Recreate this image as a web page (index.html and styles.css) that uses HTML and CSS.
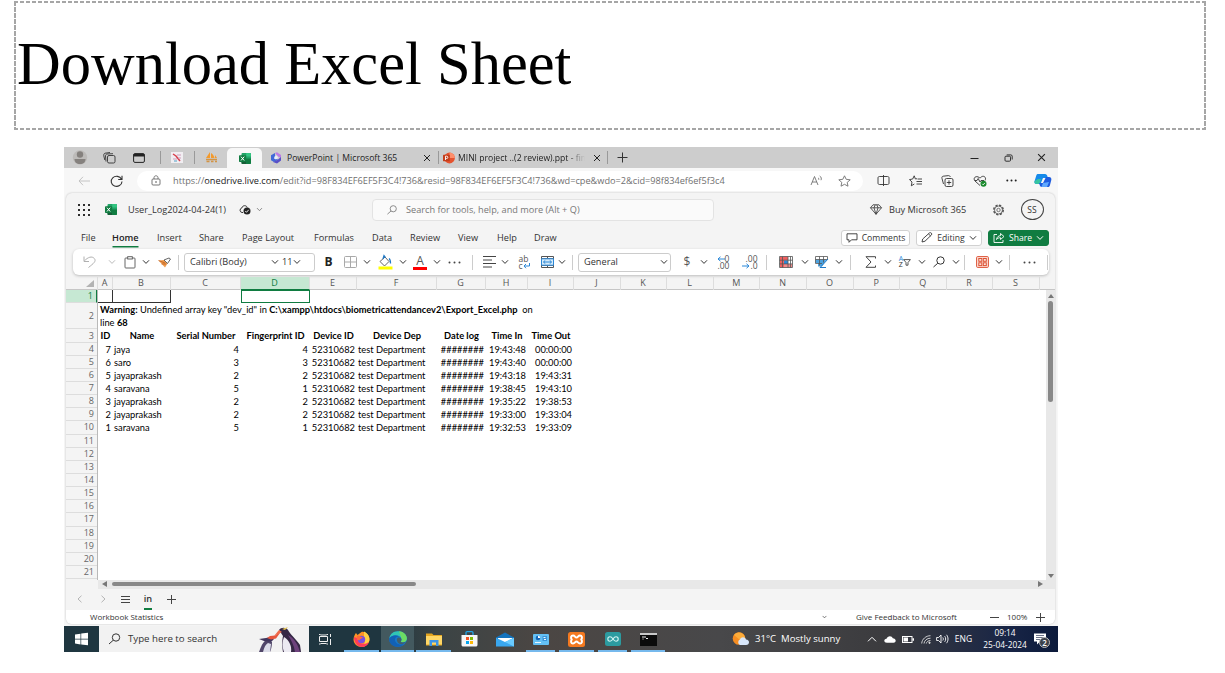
FILE: index.html
```
<!DOCTYPE html>
<html lang="en">
<head>
<meta charset="utf-8">
<title>Download Excel Sheet</title>
<link rel="stylesheet" href="styles.css">
</head>
<body>
<svg class="defs" width="0" height="0" aria-hidden="true">
  <symbol id="chev" viewBox="0 0 8 6"><path d="M1 1.3 4 4.4 7 1.3" fill="none" stroke="currentColor" stroke-width="1"/></symbol>
  <symbol id="close" viewBox="0 0 8 8"><path d="M1 1l6 6M7 1 1 7" fill="none" stroke="currentColor" stroke-width="1"/></symbol>
  <symbol id="excel" viewBox="0 0 12 11"><rect x="2.5" width="9.5" height="11" rx="1" fill="#21a366"/><path d="M7.2 0H11a1 1 0 0 1 1 1v2.5H7.2z" fill="#33c481"/><path d="M7.2 5.5H12V10a1 1 0 0 1-1 1H7.2z" fill="#107c41"/><path d="M2.5 5.5h4.7V11H3.500a1 1 0 0 1-1-1z" fill="#185c37"/><rect y="2.200" width="7.200" height="6.800" rx=".7" fill="#107c41"/><path d="m2 3.700 3.200 3.800M5.200 3.700 2 7.500" stroke="#fff" stroke-width="1"/></symbol>
  <symbol id="search" viewBox="0 0 13 12"><circle cx="8" cy="4.500" r="3.700" fill="none" stroke="currentColor"/><path d="M5.300 7.200 1 11" stroke="currentColor" fill="none"/></symbol>
</svg>

<header class="title-box"><h1>Download Excel Sheet</h1></header>

<main class="window">
  <div class="tabs">
    <svg class="c" width="16" height="15" viewBox="0 0 16 15"><circle cx="8" cy="7.500" r="7.200" fill="#bdbbb9"/><circle cx="8" cy="4.500" r="3.200" fill="#85817e"/><path d="M2.500 9h11c0 3-2 5-5.500 5s-5.500-2-5.500-5z" fill="#85817e"/></svg>
    <svg class="c" width="13" height="12" viewBox="0 0 13 12" fill="none" stroke="#333" stroke-width=".9"><rect x="4.500" y="3.500" width="7.500" height="7.500" rx="1.500"/><path d="M3 9.500 2.500 4c0-1 .5-1.800 1.500-2l6-.3M1.800 8 .8 3.800C.6 2.500 1 1.500 2 1.200L7 .5"/></svg>
    <svg class="c" width="12" height="10" viewBox="0 0 12 10"><rect x=".6" y=".6" width="10.800" height="8.800" rx="1.300" fill="none" stroke="#222"/><path d="M.6 1h10.800v2.500H.6z" fill="#222"/></svg>
    <i class="sep"></i>
    <svg class="c" width="12" height="11" viewBox="0 0 12 11"><rect width="12" height="11" fill="#f1eef2"/><path d="m2 2 3 2 4 5" stroke="#d83f4c" stroke-width="1.500" fill="none"/><path d="M6 3h4M2 7h4M7 6h3" stroke="#ce9cba" fill="none"/><path d="M3 9h3" stroke="#53a1c6"/></svg>
    <i class="sep"></i>
    <svg class="c" width="13" height="11" viewBox="0 0 13 11"><path d="M1 6 5 0v6zM6 6V1c2 1 3 3 3.500 5zM10 6V3l2 3z" fill="#f39a2c"/><path d="M1 7.500h11M1.500 9.500h3M6 9.500h2.500M10 9.500h2" stroke="#d39445" stroke-width="1.400"/></svg>
    <div class="active-tab"><svg width="12" height="11"><use href="#excel"/></svg></div>
    <svg class="c" width="12" height="12" viewBox="0 0 12 12"><path d="M5 1 1 3.300v5L4 10 8 7.500 5 6z" fill="#4069d8"/><path d="m5 1 2-.7 4 2.800v3L8 4.500z" fill="#bc7be5"/><path d="M11 5v3.500L7 11.500 3 10l5-2.500z" fill="#5850c8"/><path d="M4.500 4.500 7 3.500 8 6 6 7.500 4 6.500z" fill="#e8ecfb"/></svg>
    <span class="t-ppt">PowerPoint | Microsoft 365</span>
    <svg class="c dark" width="8" height="8"><use href="#close"/></svg>
    <i class="sep"></i>
    <svg class="c" width="12" height="12" viewBox="0 0 12 12"><circle cx="6.500" cy="6" r="5.400" fill="#e5532f"/><path d="M6.500.6a5.400 5.400 0 0 1 5.400 5.400H6.500z" fill="#ff8f6b"/><rect y="2.800" width="6.800" height="6.500" rx=".6" fill="#c43e1c"/><path d="M2.500 8V4.200h1.200a1.100 1.100 0 0 1 0 2.300H2.500" stroke="#fff" fill="none" stroke-width=".9"/></svg>
    <span class="t-mini">MINI project ..(2 review).ppt - fina</span>
    <svg class="c dark" width="8" height="8"><use href="#close"/></svg>
    <i class="sep"></i>
    <svg class="c" width="11" height="11" viewBox="0 0 11 11"><path d="M5.500.5v10M.5 5.500h10" stroke="#333"/></svg>
    <span></span>
    <svg class="c" width="9" height="8" viewBox="0 0 9 8"><path d="M.5 4.500h8" stroke="#222"/></svg>
    <svg class="c" width="9" height="8" viewBox="0 0 9 8" fill="none" stroke="#222" stroke-width=".9"><rect x="1" y="2.200" width="5.500" height="5" rx="1"/><path d="M2.700.9h4.100c.8 0 1.400.5 1.400 1.200v3.400"/></svg>
    <svg class="c dark" width="9" height="9"><use href="#close"/></svg>
  </div>

  <div class="address">
    <svg class="c" width="12" height="10" viewBox="0 0 12 10" fill="none" stroke="#c4c4c4"><path d="M12 5H1M5 .8 1 5l4 4.200"/></svg>
    <svg class="c" width="13" height="12" viewBox="0 0 13 12" fill="none" stroke="#333" stroke-width="1.100"><path d="M11.500 4.200A5.400 5 0 1 0 12 6.500M12 .8v3.700H8.200"/></svg>
    <div class="pill">
      <svg width="10" height="11" viewBox="0 0 10 11" fill="none" stroke="#6a6a6a" stroke-width=".9"><rect x="1" y="4" width="8" height="6" rx="1"/><path d="M3 4V2.600C3 .2 7 .2 7 2.600V4"/><circle cx="5" cy="7" r=".5"/></svg>
      <span class="url">https://<b>onedrive.live.com</b>/edit?id=98F834EF6EF5F3C4!736&amp;resid=98F834EF6EF5F3C4!736&amp;wd=cpe&amp;wdo=2&amp;cid=98f834ef6ef5f3c4</span>
      <svg width="13" height="11" viewBox="0 0 13 11" fill="none" stroke="#707070" stroke-width=".9"><path d="m1 10 3.500-8.500L8 10M2.200 7h4.600M8 2.800c.9.500.9 1.400.7 2M9.700 1c1.700 1 1.900 2.700 1.300 4.200"/></svg>
      <svg class="star" width="13" height="12" viewBox="0 0 13 12" fill="none" stroke="#707070" stroke-width=".9"><path id="star" d="m6.500.8 1.700 3.500 4 .5-3 2.600.8 3.800-3.500-1.900L3 11.200l.8-3.800-3-2.600 4-.5z"/></svg>
    </div>
    <svg class="c" width="13" height="11" viewBox="0 0 13 11" fill="none" stroke="#333" stroke-width=".9"><path d="M5 1.500H2.500C1.500 1.500 1 2 1 3v5c0 1 .5 1.500 1.500 1.500H5M8 1.500h2.500c1 0 1.500.5 1.500 1.500v5c0 1-.5 1.500-1.500 1.500H8M6.500 0v11M5 1.500h3M5 9.500h3"/></svg>
    <svg class="c" width="13" height="12" viewBox="0 0 13 12" fill="none" stroke="#333" stroke-width=".9"><path d="M8 3.700 6.400 4 5.200.8 3.700 4l-3.200.6L3 7l-.7 3.800 3-1.800M8.500 4H13M7.500 6.500H13M7.500 9H13"/></svg>
    <svg class="c" width="13" height="12" viewBox="0 0 13 12" fill="none" stroke="#333" stroke-width=".9"><rect x="4" y="3.500" width="8" height="8" rx="1.500"/><path d="M8 5.300v4.400M5.800 7.500h4.400M2.500 9 1 3.500C.7 2 1 1.500 2.200 1.200L7.500.6c1 0 1.500.4 1.800 1.400"/></svg>
    <svg class="c" width="14" height="12" viewBox="0 0 14 12" fill="none" stroke="#333" stroke-width=".9"><path d="M7 10.500 2 6C-.5 3 3 .2 6.200 2.500L7 3l.7-.5C10-.2 14 2 12 5.500M2 5.500h2l1.200-2L7 7l1-1.500h3"/><circle cx="10.500" cy="8.800" r="3" fill="#1b8a2d" stroke="none"/><path d="m9.200 8.800 1 1 1.700-1.900" stroke="#fff"/></svg>
    <svg class="c" width="11" height="3" viewBox="0 0 11 3" fill="#222"><circle cx="1.300" cy="1.500" r="1"/><circle cx="5.500" cy="1.500" r="1"/><circle cx="9.700" cy="1.500" r="1"/></svg>
    <svg class="c" width="18" height="15" viewBox="0 0 18 15"><path d="M4 1h7c1.500 0 2 1 2.300 2l.7 2H9L6.500 11H2.500C.7 11 0 9.500.6 8L2.300 2.500C2.600 1.500 3 1 4 1z" fill="#168bea"/><path d="M4 6h3l-1.500 5H2.500C.7 11 0 9.500.6 8z" fill="#36c3a2"/><path d="M14 14H8c-1.500 0-2-1-2.300-2L5 10h4l3-6h3c2 0 2.700 1.500 2.300 3L16 12c-.3 1.500-1 2-2 2z" fill="#1f5ddf"/><path d="m9 10-1.500 4H13l2-5z" fill="#5fa9ff"/></svg>
  </div>

  <div class="app">
    <div class="app-head">
      <svg class="c" width="12" height="12" viewBox="0 0 12 12" fill="#2d2d2d"><path d="M0 0h2v2H0zM5 0h2v2H5zM10 0h2v2h-2zM0 5h2v2H0zM5 5h2v2H5zM10 5h2v2h-2zM0 10h2v2H0zM5 10h2v2H5zM10 10h2v2h-2z"/></svg>
      <svg class="c" width="12" height="11"><use href="#excel"/></svg>
      <span class="fname">User_Log2024-04-24(1)</span>
      <svg class="c" width="12" height="10" viewBox="0 0 12 10"><path d="M4 7.500H3A2.300 2.300 0 0 1 2.800 3C3.500 0 7.500 0 8.200 2.500" fill="none" stroke="#333"/><circle cx="8" cy="6" r="3.500" fill="#222"/><path d="m6.300 6 1.200 1.300 2.200-2.500" fill="none" stroke="#fff" stroke-width=".9"/></svg>
      <svg class="c grey" width="7" height="5"><use href="#chev"/></svg>
      <div class="searchbox"><svg width="12" height="10"><use href="#search"/></svg><span>Search for tools, help, and more (Alt + Q)</span></div>
      <svg class="c" width="12" height="11" viewBox="0 0 12 11" fill="none" stroke="#333" stroke-width=".8"><path d="M3 .8h6l2.500 3L6 10.300.5 3.800zM.5 3.800h11M4 3.800l2 6.500 2-6.500L6.800.8M4 3.800 5.200.8"/></svg>
      <span class="buy">Buy Microsoft 365</span>
      <svg class="c" width="13" height="12" viewBox="0 0 13 12" fill="none" stroke="#555"><circle cx="6.500" cy="6" r="4.700" stroke-width="1.600" stroke-dasharray="2.200 1.490"/><circle cx="6.500" cy="6" r="4" stroke-width=".8"/><circle cx="6.500" cy="6" r="1.700" stroke-width=".8"/></svg>
      <span class="avatar">SS</span>
    </div>

    <div class="menu">
      <span>File</span><span class="on">Home</span><span>Insert</span><span>Share</span><span>Page Layout</span><span>Formulas</span><span>Data</span><span>Review</span><span>View</span><span>Help</span><span>Draw</span>
      <div class="btn"><svg width="12" height="10" viewBox="0 0 12 10" fill="none" stroke="#333" stroke-width=".9"><path d="M1 .8h10v6H5.500L3 9.300V6.800H1z"/></svg>Comments</div>
      <div class="btn"><svg width="12" height="11" viewBox="0 0 12 11" fill="none" stroke="#333" stroke-width=".9"><path d="m1 10 .7-3L8.500.9c1.300-.9 3 .8 2 2L4 9.200zM7.500 2l2.200 2"/></svg>Editing<svg width="8" height="6"><use href="#chev"/></svg></div>
      <div class="btn share"><svg width="12" height="11" viewBox="0 0 12 11" fill="none" stroke="#fff" stroke-width=".9"><path d="M4 2.500H1v8h9V8M3.500 7.500c.3-2.500 2-3.800 4-3.800V1.500l3.500 3-3.500 3V5.700c-1.700 0-3 .5-4 1.800z"/></svg>Share<svg width="8" height="6"><use href="#chev"/></svg></div>
    </div>

    <div class="ribbon">
      <svg class="c" width="13" height="12" viewBox="0 0 13 12" fill="none" stroke="#b0b0b0"><path d="M1 .5v5h5M1.300 5C5 1 9-.2 11.300 2.500S10.500 7.500 5.500 11.500"/></svg>
      <svg class="c pale" width="8" height="6"><use href="#chev"/></svg>
      <svg class="c" width="12" height="13" viewBox="0 0 12 13" fill="none" stroke="#555" stroke-width=".9"><rect x="1" y="2" width="10" height="10" rx=".8"/><rect x="3.700" y=".7" width="4.600" height="2.300" fill="#fff"/></svg>
      <svg class="c" width="8" height="6"><use href="#chev"/></svg>
      <svg class="c" width="13" height="11" viewBox="0 0 13 11"><path d="M.5 3.500 6 3l3.500 3.500L7 10.500z" fill="#ee9c4f"/><path d="m6 3 3.500 3.500 3-4.500L11 1z" fill="#fff" stroke="#555" stroke-width=".9"/><path d="M.5 3.500 7 6M3.500 7 8 7" stroke="#b95817" fill="none" stroke-width=".7"/></svg>
      <i class="rsep"></i>
      <div class="font"><span>Calibri (Body)</span><svg width="8" height="6"><use href="#chev"/></svg><span class="size">11</span><svg width="8" height="6"><use href="#chev"/></svg></div>
      <span class="c bold">B</span>
      <svg class="c" width="13" height="12" viewBox="0 0 13 12" fill="none" stroke="#a9a9a9"><rect x=".5" y=".5" width="12" height="11" rx="1"/><path d="M6.500.5v11M.5 6h12"/></svg>
      <svg class="c" width="8" height="6"><use href="#chev"/></svg>
      <svg class="c" width="15" height="15" viewBox="0 0 15 15"><path d="m2 6.500 5-4.500 4 4.500-4.500 4.500z" fill="none" stroke="#555" stroke-width=".9"/><path d="m5 4 1-3.300 1.500 2M11 3.500c1.500 1 1.500 3 1.500 5" fill="none" stroke="#2079c7" stroke-width="1.300"/><path d="M.5 11.500h14v3H.5z" fill="#ff0"/></svg>
      <svg class="c" width="8" height="6"><use href="#chev"/></svg>
      <span class="fcolor">A</span>
      <svg class="c" width="8" height="6"><use href="#chev"/></svg>
      <svg class="c" width="13" height="3" viewBox="0 0 13 3" fill="#444"><circle cx="1.500" cy="1.500" r="1"/><circle cx="6.500" cy="1.500" r="1"/><circle cx="11.500" cy="1.500" r="1"/></svg>
      <i class="rsep"></i>
      <svg class="c" width="13" height="12" viewBox="0 0 13 12" stroke="#444" fill="none"><path d="M0 .5h13M0 4h9M0 7.500h13M0 11h9"/></svg>
      <svg class="c" width="8" height="6"><use href="#chev"/></svg>
      <div class="wrap"><span>ab</span><span>c<svg width="7" height="6" viewBox="0 0 7 6" fill="none" stroke="#2b88d8"><path d="M6.500 0v3H1M3 1 1 3l2 2.200"/></svg></span></div>
      <svg class="c" width="13" height="12" viewBox="0 0 13 12" fill="none"><path d="M.5.500h12v11H.5zM6.500.5v2M6.500 9.500v2M.5 2.500h12M.5 9.500h12" stroke="#555"/><path d="M.5 2.800h12v6.400H.5z" fill="#d7ebf9" stroke="#2b88d8"/><path d="M2.500 6h8M4.300 4.300 2.500 6l1.800 1.700M8.700 4.300 10.500 6 8.700 7.700" stroke="#2b88d8"/></svg>
      <svg class="c" width="8" height="6"><use href="#chev"/></svg>
      <i class="rsep"></i>
      <div class="numfmt"><span>General</span><svg width="8" height="6"><use href="#chev"/></svg></div>
      <span class="c dollar">$</span>
      <svg class="c" width="8" height="6"><use href="#chev"/></svg>
      <div class="dec"><span><svg width="8" height="6" viewBox="0 0 8 6" fill="none" stroke="#2b88d8"><path d="M8 3H1M3.500.8 1 3l2.500 2.200"/></svg>0</span><span>.00</span></div>
      <div class="dec"><span>.00</span><span><svg width="8" height="6" viewBox="0 0 8 6" fill="none" stroke="#2b88d8"><path d="M0 3h7M4.500.8 7 3 4.500 5.200"/></svg>.0</span></div>
      <i class="rsep"></i>
      <svg class="c" width="14" height="12" viewBox="0 0 14 12"><path d="M1 .5h4v11H1zM5 .5h4v4H5z" fill="#ef5f5f"/><path d="M5 8h8v3.500H5z" fill="#f28b8b"/><path d="M5 4.500h4V8H5z" fill="#2b88d8"/><path d="M.5.500h13v11H.5zM.5 4.200h13M.5 7.900h13M3.500.5v11M9 .5v11M11.500.5v11" fill="none" stroke="#555" stroke-width=".8"/></svg>
      <svg class="c" width="8" height="6"><use href="#chev"/></svg>
      <svg class="c" width="14" height="12" viewBox="0 0 14 12"><path d="M.5.500h12v3H.5z" fill="#fff"/><path d="M.5 3.500h11L7 10.500H3V7H.5z" fill="#4da3e0"/><path d="M.5.500h12v3M.5.500v7H7M.5 3.500h12M4.500.5v9M8.500.5v6" fill="none" stroke="#555" stroke-width=".8"/><path d="m13 3-5.500 6L5 11.500l6 0" fill="none" stroke="#2079c7"/></svg>
      <svg class="c" width="8" height="6"><use href="#chev"/></svg>
      <i class="rsep"></i>
      <svg class="c" width="12" height="12" viewBox="0 0 12 12" fill="none" stroke="#444"><path d="M10.500 2.500V.7H1L6 6l-5 5.300h9.500V9.500"/></svg>
      <svg class="c" width="8" height="6"><use href="#chev"/></svg>
      <div class="sort"><span><em>A</em><em>Z</em></span><svg width="8" height="7" viewBox="0 0 8 7" fill="none" stroke="#444" stroke-width=".9"><path d="M.6.600h6.800L5 3.500v2.700H3V3.500z"/></svg></div>
      <svg class="c" width="8" height="6"><use href="#chev"/></svg>
      <svg class="c" width="14" height="12"><use href="#search"/></svg>
      <svg class="c" width="8" height="6"><use href="#chev"/></svg>
      <i class="rsep"></i>
      <svg class="c" width="13" height="12" viewBox="0 0 13 12" fill="none" stroke="#dd5335"><rect x=".6" y=".6" width="11.800" height="10.800" rx="1" fill="#fce4dd"/><rect x="2.800" y="2.500" width="3" height="2.800"/><rect x="7.300" y="2.500" width="3" height="2.800"/><rect x="2.800" y="6.800" width="3" height="2.800"/><rect x="7.300" y="6.800" width="3" height="2.800"/></svg>
      <svg class="c" width="8" height="6"><use href="#chev"/></svg>
      <i class="rsep"></i>
      <svg class="c" width="13" height="3" viewBox="0 0 13 3" fill="#444"><circle cx="1.500" cy="1.500" r="1"/><circle cx="6.500" cy="1.500" r="1"/><circle cx="11.500" cy="1.500" r="1"/></svg>
      <i class="rsep"></i>
      <svg class="c low" width="8" height="6"><use href="#chev"/></svg>
    </div>

    <div class="cols">
      <span class="corner"><svg width="8" height="7"><path d="M8 0v7H0z" fill="#b3b3b3"/></svg></span><span>A</span><span>B</span><span>C</span><span class="sel">D</span><span>E</span><span>F</span><span>G</span><span>H</span><span>I</span><span>J</span><span>K</span><span>L</span><span>M</span><span>N</span><span>O</span><span>P</span><span>Q</span><span>R</span><span>S</span>
    </div>

    <div class="sheet">
      <div class="rownums">
        <span class="sel">1</span><span>2</span><span>3</span><span>4</span><span>5</span><span>6</span><span>7</span><span>8</span><span>9</span><span>10</span><span>11</span><span>12</span><span>13</span><span>14</span><span>15</span><span>16</span><span>17</span><span>18</span><span>19</span><span>20</span><span>21</span>
      </div>
      <div class="cells">
        <div class="row first"><span></span><span></span><span></span><span class="cursor"></span></div>
        <div class="warn"><p><b>Warning:</b> Undefined array key "dev_id" in <b>C:\xampp\htdocs\biometricattendancev2\Export_Excel.php</b>&nbsp; on</p><p>line <b>68</b></p></div>
        <div class="row head"><span>ID</span><span>Name</span><span>Serial Number</span><span>Fingerprint ID</span><span>Device ID</span><span>Device Dep</span><span>Date log</span><span>Time In</span><span>Time Out</span></div>
        <div class="row data"><span>7</span><span>jaya</span><span>4</span><span>4</span><span>52310682</span><span>test Department</span><span>########</span><span>19:43:48</span><span>00:00:00</span></div>
        <div class="row data"><span>6</span><span>saro</span><span>3</span><span>3</span><span>52310682</span><span>test Department</span><span>########</span><span>19:43:40</span><span>00:00:00</span></div>
        <div class="row data"><span>5</span><span>jayaprakash</span><span>2</span><span>2</span><span>52310682</span><span>test Department</span><span>########</span><span>19:43:18</span><span>19:43:31</span></div>
        <div class="row data"><span>4</span><span>saravana</span><span>5</span><span>1</span><span>52310682</span><span>test Department</span><span>########</span><span>19:38:45</span><span>19:43:10</span></div>
        <div class="row data"><span>3</span><span>jayaprakash</span><span>2</span><span>2</span><span>52310682</span><span>test Department</span><span>########</span><span>19:35:22</span><span>19:38:53</span></div>
        <div class="row data"><span>2</span><span>jayaprakash</span><span>2</span><span>2</span><span>52310682</span><span>test Department</span><span>########</span><span>19:33:00</span><span>19:33:04</span></div>
        <div class="row data"><span>1</span><span>saravana</span><span>5</span><span>1</span><span>52310682</span><span>test Department</span><span>########</span><span>19:32:53</span><span>19:33:09</span></div>
      </div>
      <div class="vscroll"><svg width="6" height="4"><path d="M3 0l3 4H0z" fill="#777"/></svg><i></i><svg width="6" height="4"><path d="M0 0h6L3 4z" fill="#777"/></svg></div>
    </div>
    <div class="hscroll"><svg width="5" height="6"><path d="M5 0v6L0 3z" fill="#777"/></svg><i></i><svg width="5" height="6"><path d="M0 0v6l5-3z" fill="#777"/></svg></div>

    <div class="sheettabs">
      <svg class="c" width="5" height="8" viewBox="0 0 5 8" fill="none" stroke="#b5b5b5"><path d="M4.500.7 1 4l3.500 3.300"/></svg>
      <svg class="c" width="5" height="8" viewBox="0 0 5 8" fill="none" stroke="#b5b5b5"><path d="M.5.700 4 4 .5 7.300"/></svg>
      <svg class="c" width="9" height="7" viewBox="0 0 9 7" stroke="#444"><path d="M0 .5h9M0 3.500h9M0 6.500h9"/></svg>
      <span class="c in">in</span>
      <svg class="c" width="9" height="9" viewBox="0 0 9 9" stroke="#444"><path d="M4.500 0v9M0 4.500h9"/></svg>
    </div>
    <div class="status"><span>Workbook Statistics</span><svg width="5" height="4"><use href="#chev"/></svg><span class="fb">Give Feedback to Microsoft</span><svg width="9" height="9" viewBox="0 0 9 9" stroke="#444"><path d="M0 4.500h9"/></svg><span>100%</span><svg width="9" height="9" viewBox="0 0 9 9" stroke="#444"><path d="M0 4.500h9M4.500 0v9"/></svg></div>
  </div>

  <div class="taskbar">
    <svg class="c" width="13" height="12" viewBox="0 0 13 12" fill="#fff"><path d="m0 1.500 5.500-.8v5H0zM6.200.6 13-.2v5.900H6.200zM0 6.400h5.500v5L0 10.600zM6.200 6.400H13V12.200l-6.800-.8z"/></svg>
    <div class="tsearch">
      <svg width="13" height="12"><use href="#search"/></svg><span>Type here to search</span>
      <svg class="bird" width="44" height="26" viewBox="0 0 44 26"><path d="M1 26c2-6 4-10 7-12l6 2c0 4-1 8-2 10z" fill="#51476a"/><path d="M5 26c1-5 3-8 5-9l3 1-1 8z" fill="#dcdde9"/><path d="m1 13 7-1 5-1 3 2-3 3-7-1z" fill="#41365d"/><path d="m9 12 3-2 5-.5 6-4-5 7-5 1z" fill="#e6573e"/><path d="M21 4c2-3 7-3 9 0 2 4 8 9 12 15l1 7H25c-1-5-1-12 0-16z" fill="#352745"/><path d="m21 4-5 6 8-4z" fill="#f06a49"/><path d="M26 11c-2 5-2 10 0 15h7c1-6-2-12-7-15z" fill="#eceaf2"/><path d="M30 9c7 4 10 10 12 17h-5c-1-7-4-12-7-17z" fill="#6e427d"/><path d="m24 3 6-2-3 3z" fill="#e6c652"/></svg>
    </div>
    <svg class="c" width="13" height="11" viewBox="0 0 13 11" fill="none" stroke="#eee"><path d="M.5 2.500h8v5h-8zM0 .5h1.500M7.500.5H9M0 10h1.500M7.500 10H9M1.500 1h6M1.500 9.500h6M11.500 0v3M11.500 5v6"/></svg>
    <div class="app-ico run"><svg width="17" height="16" viewBox="0 0 17 16"><path d="M8.500 1C12 0 17 4 16.500 9c-.5 4-4 7-8 7S.5 13 .5 8.500C.5 6 2 3 3 2l1.500 2z" fill="#ff9425"/><path d="M11 .5c4 2 6 5.500 5.300 9-.8 3.500-4 6-7.600 6.400C12 13 13 10 11 6z" fill="#ffd044"/><path d="M1 6c0 6 4 10 8 10 3 0 6-2 7-5-6 4-11 1-12-4z" fill="#ff3c59"/><circle cx="8.500" cy="8.500" r="3.700" fill="#7750df"/><path d="M4 4.500c2 0 3 .5 4 1.500l2 0c-1 2-3 1.500-4 3.500-2-1-2.500-3-2-5z" fill="#ff6a36"/></svg></div>
    <div class="app-ico run cur"><svg width="18" height="16" viewBox="0 0 18 16"><ellipse cx="9" cy="8" rx="8.800" ry="7.800" fill="#1678c9"/><path d="M.3 7.500C1 3 4.500.2 9 .2c5 0 9 3.500 8.800 7.500-.2 3-3 4-6 3.300 1-1 1-2 .7-3.200C12 5 8 3.500 4.500 4.500 2.500 5 1 6 .3 7.500z" fill="#31c5b4"/><path d="M10 .3c4.500.3 8 3.700 7.800 7.400-.2 3-3 4-6 3.300 1-1 1-2 .7-3.200z" fill="#6ddc63"/><path d="M.3 7.500C2 4.500 7 3.500 10 5.500c-4-.3-5 3.500-3 6 2 2.300 5 2.500 8 1.500-3.500 4-10 3.500-13 0C.6 11.500 0 9.500.3 7.500z" fill="#1261b6"/><path d="M8.500 7c1.500-1 4 0 4 1.500L11.700 11c2.300.8 4 .3 5-.5-1 2-3 3-5.200 2.600C8.500 12.500 7 9 8.500 7z" fill="#41606c"/></svg></div>
    <div class="app-ico run"><svg width="16" height="13" viewBox="0 0 16 13"><path d="M0 .5h6L7.500 2H16v10.500H0z" fill="#e3a521"/><path d="M0 3h16v8.500H0z" fill="#ffd766"/><path d="M3.500 7h9v6H10V9.500H6V13H3.500z" fill="#3d94e5"/></svg></div>
    <div class="app-ico"><svg width="17" height="16" viewBox="0 0 17 16"><path d="M5 5V1.700C5 1 5.300.7 6 .7h5c.7 0 1 .3 1 1V5" fill="none" stroke="#22a4e6" stroke-width="1.300"/><path d="M.5 4h16v9.500c0 1.500-.5 2-2 2h-12c-1.500 0-2-.5-2-2z" fill="#f6f6f6"/><path d="M5 6h3v3H5z" fill="#f35325"/><path d="M9 6h3v3H9z" fill="#81bc06"/><path d="M5 10h3v3H5z" fill="#05a6f0"/><path d="M9 10h3v3H9z" fill="#ffba08"/></svg></div>
    <div class="app-ico"><svg width="18" height="15" viewBox="0 0 18 15"><path d="M0 5.500 9 .5l9 5V14H0z" fill="#1473bd"/><path d="M2 6h14v4H2z" fill="#fff"/><path d="M0 5.800 9 10l9-4.200V14.500H0z" fill="#39a7ef"/><path d="m9 10 9-4.200v8.700z" fill="#6acbff"/></svg></div>
    <div class="app-ico run"><svg width="16" height="11" viewBox="0 0 16 11"><rect width="16" height="11" rx="1" fill="#64c0f4"/><circle cx="5" cy="4" r="2.300" fill="#1466b8"/><path d="M5 4V1.700A2.300 2.300 0 0 1 7.300 4z" fill="#fff"/><path d="M9.500 2h4.500v5H9.500z" fill="#3b94d8"/><path d="M10.500 3.500h2M2 8.500h6M11 5.500h2" stroke="#e8f7ff"/></svg></div>
    <div class="app-ico run"><svg width="17" height="15" viewBox="0 0 17 15"><rect width="17" height="15" rx="2.500" fill="#f47920"/><path d="M5 3.500c2 0 2 2 3.500 2s1.500-2 3.500-2 2.500 2 1.300 4c1.200 2 .7 4-1.300 4s-2-2-3.500-2-1.500 2-3.500 2-2.500-2-1.300-4c-1.200-2-.7-4 1.300-4z" fill="none" stroke="#fff" stroke-width="2"/></svg></div>
    <div class="app-ico run"><svg width="16" height="14" viewBox="0 0 16 14"><rect width="16" height="14" rx="2.500" fill="#2c9ba0"/><path d="M8 7c-1-1.500-2-2.200-3-2.200a2.200 2.200 0 0 0 0 4.400C6 9.200 7 8.500 8 7s2-2.200 3-2.200a2.200 2.200 0 0 1 0 4.400C10 9.200 9 8.500 8 7z" fill="none" stroke="#d5f4f2" stroke-width="1.100"/></svg></div>
    <div class="app-ico run"><svg width="17" height="13" viewBox="0 0 17 13"><rect width="17" height="13" fill="#0b0b0b"/><path d="M0 0h17v2H0z" fill="#c9c9c9"/><path d="M2 4h4M2.500 6h1M6 5.500h2" stroke="#eee"/></svg></div>
    <span></span>
    <svg class="c" width="18" height="14" viewBox="0 0 18 14"><circle cx="7" cy="6.500" r="6.300" fill="#f68d22"/><path d="M2 3a6.300 6.300 0 0 1 9-1c2 2 2.500 4 2 6L8 8z" fill="#fcac3a"/><path d="M8 13a3 3 0 0 1 0-5.500C9 4.500 13 4.500 14 7.500c4 .3 4 5.500 0 5.500z" fill="#d7e6fa"/></svg>
    <span class="weather">31°C&nbsp; Mostly sunny</span>
    <svg class="c" width="10" height="6" viewBox="0 0 10 6" fill="none" stroke="#fff"><path d="m1 5.300 4-4 4 4"/></svg>
    <svg class="c" width="12" height="7" viewBox="0 0 12 7"><path d="M3 6.800C-.5 6.800-.5 3 2.500 2.800 3.500-.5 8-.5 8.800 2.300c3.500 0 4 4.500.7 4.500z" fill="#fff"/></svg>
    <svg class="c" width="12" height="7" viewBox="0 0 12 7"><rect x=".5" y=".5" width="9.500" height="6" fill="none" stroke="#fff"/><path d="M1.500 1.500h4.500v4H1.500zM10.500 2.200H12v2.600h-1.500z" fill="#fff"/></svg>
    <svg class="c" width="10" height="9" viewBox="0 0 10 9" fill="none" stroke="#ddd" stroke-width=".9"><path d="M.7 8.500C1 4 5 .7 9.500.7M3 8.500c.3-3 3-5.300 6.500-5.300M5.300 8.500c.2-1.700 2-3 4.200-3"/><circle cx="8.500" cy="7.800" r=".7" fill="#ddd"/></svg>
    <svg class="c" width="13" height="10" viewBox="0 0 13 10" fill="none" stroke="#fff" stroke-width=".9"><path d="M.6 3.500h2L5 1v8L2.600 6.500h-2zM6.800 3.500c.7 1 .7 2 0 3M8.700 2.200c1.300 1.600 1.300 4 0 5.600M10.500.8c2 2.500 2 6 0 8.400"/></svg>
    <span class="eng">ENG</span>
    <div class="clock"><span>09:14</span><span>25-04-2024</span></div>
    <div class="notif"><svg width="13" height="13" viewBox="0 0 13 13"><path d="M0 .5h12v8H6L3 11.500v-3H0z" fill="#fff"/><path d="M2 2.500h8M2 4.500h8M2 6.500h5" stroke="#47506b" stroke-width=".8"/></svg><b>2</b></div>
  </div>
</main>
</body>
</html>
```
FILE: styles.css
```
* { box-sizing: border-box; }
body {
  margin: 0;
  padding: 1px 0 0 14px;
  height: 673px;
  overflow: hidden;
  background: #fff;
  font-family: "Open Sans", "Noto Sans", sans-serif;
  font-size: 9.200px;
  line-height: 12px;
  color: #333;
}
svg { display: block; flex: none; overflow: visible; }
span { white-space: nowrap; }
.defs { display: none; }
.c { justify-self: center; }
.dark { color: #222; }
.grey { color: #777; }
.pale { color: #bbb; }

/* slide title */
.title-box {
  width: 1192px;
  height: 129px;
  display: flex;
  align-items: center;
  background:
    repeating-linear-gradient(90deg, #a6a6a6 0 4.500px, transparent 4.500px 6px) 0 0 / 100% 2px no-repeat,
    repeating-linear-gradient(90deg, #a6a6a6 0 4.500px, transparent 4.500px 6px) 0 100% / 100% 2px no-repeat,
    repeating-linear-gradient(#a6a6a6 0 4.500px, transparent 4.500px 6px) 0 0 / 2px 100% no-repeat,
    repeating-linear-gradient(#a6a6a6 0 4.500px, transparent 4.500px 6px) 100% 0 / 2px 100% no-repeat;
}
.title-box h1 {
  margin: 0;
  padding: 0 0 4px 3px;
  font: 400 60.500px/68px "Liberation Serif", serif;
  color: #000;
}

.window {
  width: 994px;
  height: 505px;
  margin: 17px 0 0 50px;
  display: flex;
  flex-direction: column;
  overflow: hidden;
  background: #f7f7f7;
}

/* browser tabs */
.tabs {
  height: 21px;
  flex: none;
  display: grid;
  grid-template-columns: 32px 26px 34px 8px 26px 8px 26px 41px 22px 130px 19px 4px 18px 131px 15px 6px 24px 322px 36px 32px 34px;
  align-items: center;
  background: #cdcdcd;
  font-size: 8.600px;
  color: #222;
}
.sep { width: 1px; height: 13px; background: #999; justify-self: center; }
.active-tab {
  width: 35px;
  height: 20px;
  align-self: end;
  justify-self: center;
  display: grid;
  place-items: center;
  background: #f7f7f7;
  border-radius: 5px 5px 0 0;
}
.t-mini {
  width: 127px;
  overflow: hidden;
  -webkit-mask: linear-gradient(90deg, #000 86%, transparent);
  mask: linear-gradient(90deg, #000 86%, transparent);
}

/* address bar */
.address {
  height: 25px;
  flex: none;
  display: grid;
  grid-template-columns: 40px 25px 8px 726px 40px 25px 39px 25px 39px 24px;
  align-items: center;
}
.pill {
  grid-column: 4;
  width: 726px;
  height: 20px;
  display: flex;
  align-items: center;
  padding: 0 12px 0 14px;
  background: #fff;
  border-radius: 10px;
  color: #707070;
  font-size: 9.200px;
}
.pill .url { width: 639px; margin-left: 12px; letter-spacing: 0; }
.pill b { font-weight: 400; color: #222; }
.pill .star { margin-left: 15px; }

/* office app frame */
.app {
  height: 431px;
  flex: none;
  margin: 0 3px 0 2px;
  display: flex;
  flex-direction: column;
  overflow: hidden;
  background: #f4f4f4;
  border-radius: 6px;
  box-shadow: 0 0 2px #bbb;
}
.app-head {
  height: 33px;
  flex: none;
  display: grid;
  grid-template-columns: 36px 18px 8px 110px 14px 15px 105px 342px 155px 14px 6px 92px 34px 34px;
  align-items: center;
}
.fname { grid-column: 4; }
.searchbox {
  grid-column: 8;
  height: 22px;
  display: flex;
  align-items: center;
  gap: 8px;
  padding-left: 13px;
  background: #fafafa;
  border: 1px solid #e3e3e3;
  border-radius: 4px;
  color: #777;
}
.searchbox + svg { grid-column: 10; }
.buy { grid-column: 12; }
.avatar {
  width: 23px;
  height: 21px;
  justify-self: center;
  border: 1px solid #444;
  border-radius: 50%;
  text-align: center;
  line-height: 19px;
  font-size: 8.500px;
}

.menu {
  height: 23px;
  flex: none;
  display: grid;
  grid-template-columns: 31px 45px 42px 43px 72px 58px 38px 48px 39px 37px 307px 75px 72px 61px;
  padding-left: 15px;
  align-items: center;
}
.menu .on { justify-self: start; font-weight: 600; line-height: 16px; box-shadow: 0 2px 0 -0.5px #107c41; color: #222; }
.btn {
  height: 16px;
  display: flex;
  align-items: center;
  justify-content: center;
  gap: 4px;
  margin-right: 6px;
  background: #fff;
  border: 1px solid #d1d1d1;
  border-radius: 3px;
  font-size: 8.600px;
}
.btn.share { margin-right: 0; background: #107c41; border-color: #107c41; color: #fff; }

.ribbon {
  height: 26px;
  flex: none;
  margin: 0 6px 0 7px;
  display: grid;
  grid-template-columns: 32px 0px 14px 0px 0px;
  background: #fff;
  border-radius: 6px;
  box-shadow: 0 1px 3px #bbb;
  align-items: center;
  grid-template-columns:
    32px 14px 21px 12px 24px 4px 139px
    19px 25px 8px 28px 8px 26px 8px 26px 10px
    24px 8px 30px 17px 12px 8px 97px
    28px 6px 32px 22px 10px
    30px 8px 26px 8px 14px
    28px 6px 28px 6px 28px 6px 10px
    26px 8px 12px 28px 8px 86px;
}
.rsep { width: 1px; height: 15px; background: #ccc; justify-self: center; }
.font {
  width: 131px;
  height: 19px;
  justify-self: center;
  display: grid;
  grid-template-columns: 81px 11px 11px 13px 8px;
  align-items: center;
  padding-left: 5px;
  border: 1px solid #ccc;
  border-radius: 3px;
}
.font .size { grid-column: 3; }
.font { position: static; }
.bold { font-weight: 700; font-size: 12px; color: #222; }
.fcolor { width: 14px; height: 15px; justify-self: center; border-bottom: 3px solid #f00; text-align: center; font-size: 12px; line-height: 12px; color: #555; }
.wrap, .dec { display: flex; flex-direction: column; justify-self: center; font-size: 8.500px; line-height: 7px; color: #555; }
.wrap span, .dec span { display: flex; align-items: center; justify-content: flex-end; }
.wrap span { justify-content: flex-start; }
.numfmt { height: 19px; width: 93px; justify-self: center; display: flex; align-items: center; justify-content: space-between; padding: 0 2px 0 5px; border: 1px solid #ccc; border-radius: 3px; }
.dollar { font-size: 12px; color: #555; }
.sort { display: flex; align-items: center; justify-self: center; }
.sort span { display: flex; flex-direction: column; font-size: 7px; line-height: 6px; }
.sort em { font-style: normal; }
.sort em:first-child { color: #2b88d8; }
.low { padding-top: 0; margin-top: 7px; margin-left: 44px; }

/* column headers */
.cols, .row {
  display: grid;
  grid-template-columns: 15px 58px 70px 69px 47px 80px 49px 42px 46px 47px 46px 47px 46.500px 46.500px 47px 46.500px 46.500px 46px 47px;
}
.cols {
  height: 13px;
  flex: none;
  margin-top: 2px;
  padding-right: 10px;
  grid-template-columns: 31.500px 15px 58px 70px 69px 47px 80px 49px 42px 46px 47px 46px 47px 46.500px 46.500px 47px 46.500px 46.500px 46px 47px;
  border-bottom: 1px solid #c6c6c6;
  font-size: 9px;
  text-align: center;
  color: #555;
}
.cols span { border-right: 1px solid #ddd; line-height: 12px; }
.cols .sel { background: #c6e8d3; border-bottom: 1px solid #107c41; color: #107c41; }
.cols .corner { display: flex; align-items: center; justify-content: flex-end; padding-right: 3px; }

.sheet { height: 289.500px; flex: none; display: grid; grid-template-columns: 32px 948px 9px; }
.rownums { display: grid; grid-template-rows: 13.150px 26.300px repeat(19, 13.150px); border-right: 1px solid #b9b9b9; background: #f4f4f4; }
.rownums span { display: flex; align-items: center; justify-content: flex-end; padding-right: 3px; border-bottom: 1px solid #ddd; color: #666; font-size: 9px; }
.rownums .sel { background: #c6e8d3; color: #107c41; border-right: 1px solid #107c41; }
.cells {
  background: #fff;
  font-family: Lato, "Noto Sans", sans-serif;
  font-size: 9.300px;
  color: #000;
}
.row { height: 13.150px; line-height: 13px; }
.first span:nth-child(-n+2) { border-right: 1px solid #333; border-bottom: 1px solid #333; }
.cursor { border: 1.500px solid #107c41; }
.warn { height: 26.300px; padding-left: 2px; }
.warn p { margin: 0; line-height: 13.150px; white-space: nowrap; }
.head { font-weight: 700; text-align: center; }
.data span { text-align: right; padding-right: 2px; }
.data span:nth-child(2), .data span:nth-child(6) { text-align: left; padding-left: 1px; }

.vscroll { display: flex; flex-direction: column; align-items: center; padding: 4px 0 2px; background: #e8e8e8; }
.vscroll i { width: 5px; height: 101px; margin-top: 3px; margin-bottom: auto; border-radius: 3px; background: #888; }
.hscroll { height: 9px; flex: none; margin-left: 32px; display: flex; align-items: center; padding: 0 12px 0 4px; background: #e8e8e8; }
.hscroll i { width: 304px; height: 4px; margin: 0 auto 0 5px; border-radius: 2px; background: #888; }

.sheettabs { height: 21.500px; flex: none; display: grid; grid-template-columns: 26px 22px 22px 24px 22px; align-items: center; }
.in { font-weight: 600; line-height: 19px; align-self: end; border-bottom: 2px solid #107c41; }
.status {
  flex: 1;
  display: grid;
  grid-template-columns: 732px 34px 134px 17px 29px 10px;
  align-items: center;
  padding-left: 24px;
  background: #fff;
  font-size: 8px;
  line-height: 12px;
}

/* taskbar */
.taskbar {
  height: 26px;
  flex: none;
  margin-top: auto;
  display: grid;
  grid-template-columns: 35px 210px 33px 39px 33px 39px 32px 39px 33px 39px 33px 38px 64px 20px 111px 19px 17px 19px 17px 17px 25px 58px 24px;
  align-items: center;
  background: linear-gradient(90deg, #1f3640 0 32%, #3c4445 38%, #4b4643 48%, #48484a 66%, #3b3b3e 83%, #182546 95%, #0c1a3b);
  color: #fff;
}
.tsearch { position: relative; height: 26px; display: flex; align-items: center; gap: 7px; padding-left: 9px; background: #f2f2f2; font-size: 9.700px; color: #333; }
.bird { margin-left: auto; margin-right: 7px; }
.app-ico { position: relative; height: 26px; display: grid; place-items: center; }
.run::after { content: ""; position: absolute; left: 2px; right: 2px; bottom: 0; height: 2px; background: #76b9ed; }
.cur { background: #43595f; }
.cur::after { left: 0; right: 0; }
.weather { padding-left: 4px; font-size: 9.600px; }
.eng { font-size: 8.500px; justify-self: center; }
.clock { display: flex; flex-direction: column; align-items: center; font-size: 8.300px; line-height: 12px; }
.notif { position: relative; }
.notif b { position: absolute; left: 5px; top: 4px; width: 11px; height: 11px; border-radius: 50%; background: #3c4049; border: 1px solid #bbb; text-align: center; font: 600 8px/9px "Open Sans", sans-serif; }
```
